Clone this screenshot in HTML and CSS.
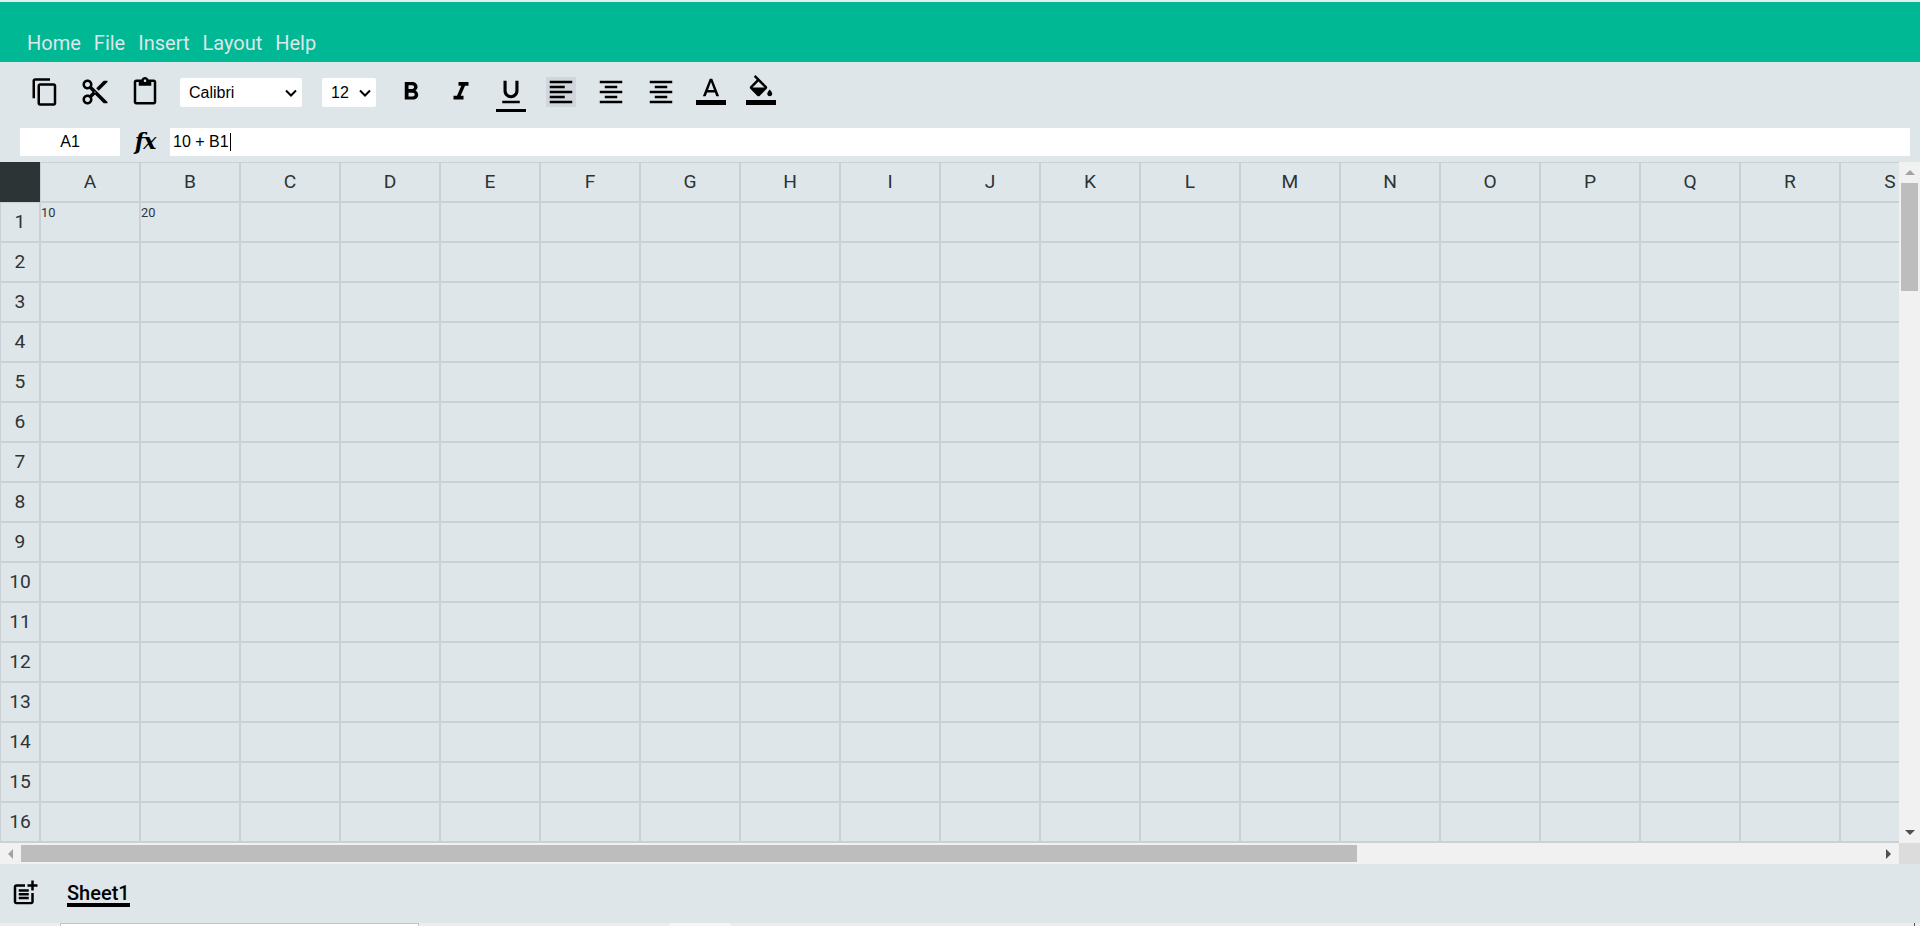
FILE: index.html
```html
<!DOCTYPE html>
<html lang="en">
<head>
<meta charset="utf-8">
<title>Sheet</title>
<link rel="stylesheet" href="styles.css">
</head>
<body>
<header class="menubar">
  <span class="menu-item">Home</span>
  <span class="menu-item">File</span>
  <span class="menu-item">Insert</span>
  <span class="menu-item">Layout</span>
  <span class="menu-item">Help</span>
</header>
<section class="toolbar">
  <span class="tool"><svg viewBox="0 0 24 24"><path d="M16 1H4c-1.1 0-2 .9-2 2v14h2V3h12V1zm3 4H8c-1.1 0-2 .9-2 2v14c0 1.1.9 2 2 2h11c1.1 0 2-.9 2-2V7c0-1.1-.9-2-2-2zm0 16H8V7h11v14z"/></svg></span>
  <span class="tool"><svg viewBox="0 0 24 24"><path d="M9.64 7.64c.23-.5.36-1.05.36-1.64 0-2.21-1.79-4-4-4S2 3.79 2 6s1.79 4 4 4c.59 0 1.14-.13 1.64-.36L10 12l-2.36 2.36C7.14 14.13 6.59 14 6 14c-2.21 0-4 1.79-4 4s1.79 4 4 4 4-1.79 4-4c0-.59-.13-1.14-.36-1.64L12 14l7 7h3v-1L9.64 7.64zM6 8c-1.1 0-2-.89-2-2s.9-2 2-2 2 .89 2 2-.9 2-2 2zm0 12c-1.1 0-2-.89-2-2s.9-2 2-2 2 .89 2 2-.9 2-2 2zm6-7.5c-.28 0-.5-.22-.5-.5s.22-.5.5-.5.5.22.5.5-.22.5-.5.5zM19 3l-6 6 2 2 7-7V3z"/></svg></span>
  <span class="tool"><svg viewBox="0 0 24 24"><path d="M19 2h-4.18C14.4.84 13.3 0 12 0c-1.3 0-2.4.84-2.82 2H5c-1.1 0-2 .9-2 2v16c0 1.1.9 2 2 2h14c1.1 0 2-.9 2-2V4c0-1.1-.9-2-2-2zm-7 0c.55 0 1 .45 1 1s-.45 1-1 1-1-.45-1-1 .45-1 1-1zm7 18H5V4h2v3h10V4h2v16z"/></svg></span>
  <div class="select select-font"><span>Calibri</span><svg class="chevron" viewBox="0 0 12 8"><path d="M1 1.5l5 5 5-5" /></svg></div>
  <div class="select select-size"><span>12</span><svg class="chevron" viewBox="0 0 12 8"><path d="M1 1.5l5 5 5-5" /></svg></div>
  <span class="tool"><svg viewBox="0 0 24 24"><path d="M15.6 10.79c.97-.67 1.65-1.77 1.65-2.79 0-2.26-1.75-4-4-4H7v14h7.04c2.09 0 3.71-1.7 3.71-3.79 0-1.52-.86-2.82-2.15-3.42zM10 6.5h3c.83 0 1.5.67 1.5 1.5s-.67 1.5-1.5 1.5h-3v-3zm3.5 9H10v-3h3.5c.83 0 1.5.67 1.5 1.5s-.67 1.5-1.5 1.5z"/></svg></span>
  <span class="tool"><svg viewBox="0 0 24 24"><path d="M10 4v3h2.21l-3.42 8H6v3h8v-3h-2.21l3.42-8H18V4z"/></svg></span>
  <span class="tool tool-underlined"><svg viewBox="0 0 24 24"><path d="M12 17c3.31 0 6-2.69 6-6V3h-2.5v8c0 1.93-1.57 3.5-3.5 3.5S8.5 12.93 8.5 11V3H6v8c0 3.31 2.69 6 6 6zm-7 2v2h14v-2H5z"/></svg></span>
  <span class="tool tool-active"><svg viewBox="0 0 24 24"><path d="M15 15H3v2h12v-2zm0-8H3v2h12V7zM3 13h18v-2H3v2zm0 8h18v-2H3v2zM3 3v2h18V3H3z"/></svg></span>
  <span class="tool"><svg viewBox="0 0 24 24"><path d="M7 15v2h10v-2H7zm-4 6h18v-2H3v2zm0-8h18v-2H3v2zm4-6v2h10V7H7zM3 3v2h18V3H3z"/></svg></span>
  <span class="tool"><svg viewBox="0 0 24 24"><path d="M7 15v2h10v-2H7zm-4 6h18v-2H3v2zm0-8h18v-2H3v2zm4-6v2h10V7H7zM3 3v2h18V3H3z"/></svg></span>
  <span class="tool tool-raised"><svg viewBox="0 0 24 24"><path d="M0 20h24v4H0z"/><path d="M11 3L5.5 17h2.25l1.12-3h6.25l1.12 3h2.25L13 3h-2zm-1.38 9L12 5.67 14.38 12H9.62z"/></svg></span>
  <span class="tool tool-raised"><svg viewBox="0 0 24 24"><path d="M16.56 8.94L7.62 0 6.21 1.41l2.38 2.38-5.15 5.15c-.59.59-.59 1.54 0 2.12l5.5 5.5c.29.29.68.44 1.06.44s.77-.15 1.06-.44l5.5-5.5c.59-.58.59-1.53 0-2.12zM5.21 10L10 5.21 14.79 10H5.21zM19 11.5s-2 2.17-2 3.5c0 1.1.9 2 2 2s2-.9 2-2c0-1.33-2-3.5-2-3.5z"/><path d="M0 20h24v4H0z"/></svg></span>
</section>
<section class="formula-row">
  <div class="name-box">A1</div>
  <div class="fx">fx</div>
  <div class="formula-input"><span>10 + B1</span><i class="caret"></i></div>
</section>
<section class="sheet">
  <div class="viewport"><div class="grid" id="grid"></div></div>
  <div class="vscroll">
    <div class="sb-btn"><i class="tri tri-up"></i></div>
    <div class="vtrack"><div class="vthumb"></div></div>
    <div class="sb-btn"><i class="tri tri-down"></i></div>
  </div>
  <div class="hscroll">
    <div class="sb-btn"><i class="tri tri-left"></i></div>
    <div class="htrack"><div class="hthumb"></div></div>
    <div class="sb-btn"><i class="tri tri-right"></i></div>
  </div>
  <div class="sb-corner"></div>
</section>
<footer class="tabs">
  <span class="tool add-sheet"><svg viewBox="0 0 24 24"><path d="M17 19.22H5V7h7V5H5c-1.1 0-2 .9-2 2v12c0 1.1.9 2 2 2h12c1.1 0 2-.9 2-2v-7h-2v7.22z"/><path d="M19 2h-2v3h-3c.01.01 0 2 0 2h3v2.99c.01.01 2 0 2 0V7h3V5h-3V2z"/><path d="M7 9h8v2H7zM7 12v2h8v-2h-3zM7 15h8v2H7z"/></svg></span>
  <span class="sheet-tab">Sheet1</span>
</footer>
<div class="strip">
  <div class="strip-box"></div>
  <div class="strip-light"></div>
  <div class="strip-tick"></div>
</div>
<script src="script.js"></script>
</body>
</html>
```
FILE: styles.css
```css
* { box-sizing: border-box; }
html, body { margin: 0; padding: 0; height: 926px; overflow: hidden; }
body { background: #dfe6e9; font-family: "Liberation Sans", Arial, sans-serif; color: #000; }

.menubar {
  height: 62px;
  border-top: 2px solid #e6ecee;
  background: #00b894;
  display: flex;
  align-items: flex-end;
  padding: 0 0 7px 27px;
  gap: 13px;
  font-family: Roboto, sans-serif;
  font-size: 20px;
  line-height: 24px;
  color: #dfe6e9;
}

.toolbar {
  height: 66px;
  display: flex;
  align-items: flex-start;
  padding: 15px 0 0 30px;
}
.tool { display: block; width: 30px; height: 30px; margin-right: 20px; flex: none; }
.tool svg { display: block; width: 30px; height: 30px; fill: #000; }
.tool-active { background: #d0d6dc; }
.tool-underlined { height: 35px; padding-bottom: 2px; border-bottom: 3px solid #000; }
.tool-raised { margin-top: -2px; }

.select {
  height: 29px;
  margin-top: 1px;
  background: #fff;
  border-radius: 2px;
  display: flex;
  align-items: center;
  justify-content: space-between;
  font-size: 16px;
  flex: none;
}
.select-font { width: 122px; padding: 0 5px 0 9px; margin-right: 20px; }
.select-size { width: 54px; padding: 0 5px 0 9px; margin-right: 20px; }
.chevron { width: 12px; height: 8px; fill: none; stroke: #000; stroke-width: 2; }

.formula-row {
  height: 28px;
  margin-bottom: 6px;
  display: flex;
  padding: 0 10px 0 20px;
}
.name-box {
  width: 100px;
  background: #fff;
  font-size: 16px;
  line-height: 28px;
  text-align: center;
}
.fx {
  width: 50px;
  text-align: center;
  font-family: "DejaVu Serif", serif;
  font-weight: 700;
  font-style: italic;
  font-size: 22px;
  line-height: 26px;
  letter-spacing: -1px;
}
.formula-input {
  flex: 1;
  background: #fff;
  font-size: 16px;
  line-height: 28px;
  padding-left: 3px;
  display: flex;
  align-items: center;
}
.caret { display: block; width: 1px; height: 18px; background: #000; margin-left: 1px; }

.sheet {
  display: grid;
  grid-template-columns: 1fr 21px;
  grid-template-rows: 681px 21px;
}
.viewport { overflow: hidden; }
.grid {
  display: grid;
  grid-template-columns: 40px repeat(19, 100px);
  grid-auto-rows: 40px;
  width: 1940px;
}
.cell { border: 1px solid #cbd0d4; font-family: Roboto, sans-serif; font-size: 12.8px; line-height: 15px; padding: 2px 0 0 0; color: #2d3436; }
.head {
  font-size: 19.2px;
  display: flex;
  align-items: center;
  justify-content: center;
  padding: 0 0 2px;
  color: #2d3436;
}
.corner { background: #2d3436; border: 0; }

.vscroll { background: #f1f1f1; display: flex; flex-direction: column; }
.sb-btn { width: 21px; height: 21px; flex: none; display: flex; align-items: center; justify-content: center; }
.vtrack { flex: 1; padding: 0 2px; }
.vthumb { height: 108px; background: #bdbdbd; }
.hscroll { background: #f1f1f1; display: flex; }
.htrack { flex: 1; padding: 2px 0; }
.hthumb { width: 1336px; height: 17px; background: #bdbdbd; }
.sb-corner { background: #dcdcdc; }

.tri { display: block; width: 0; height: 0; border-style: solid; border-color: transparent; }
.tri-up { border-width: 0 5px 5px; border-bottom-color: #a3a3a3; }
.tri-down { border-width: 5px 5px 0; border-top-color: #505050; }
.tri-left { border-width: 5px 5px 5px 0; border-right-color: #a3a3a3; }
.tri-right { border-width: 5px 0 5px 5px; border-left-color: #505050; }

.tabs {
  height: 59px;
  display: flex;
  align-items: flex-start;
  padding: 14px 0 0 10px;
}
.add-sheet { margin-right: 27px; }
.sheet-tab {
  font-family: Roboto, sans-serif;
  font-weight: 500;
  font-size: 20px;
  line-height: 24px;
  height: 26px;
  color: #000;
  border-bottom: 4px solid #000;
  margin-top: 3px;
}

.strip {
  height: 3px;
  background: #ededed;
  display: flex;
  padding-left: 60px;
  overflow: hidden;
}
.strip-box { width: 359px; height: 6px; background: #fff; border: 1px solid #c4c4c4; margin-right: 251px; }
.strip-light { width: 61px; background: #f6f6f6; margin-right: auto; }
.strip-tick { width: 1px; background: #555; margin-right: 5px; }
```
FILE: script.js
```js
(function () {
  var grid = document.getElementById('grid');
  var html = '<div class="cell corner"></div>';
  var c, r;
  for (c = 0; c < 19; c++) {
    html += '<div class="cell head">' + String.fromCharCode(65 + c) + '</div>';
  }
  var data = { '1:0': '10', '1:1': '20' };
  for (r = 1; r <= 17; r++) {
    html += '<div class="cell head">' + (r < 17 ? r : '') + '</div>';
    for (c = 0; c < 19; c++) {
      html += '<div class="cell">' + (data[r + ':' + c] || '') + '</div>';
    }
  }
  grid.innerHTML = html;
})();
```
